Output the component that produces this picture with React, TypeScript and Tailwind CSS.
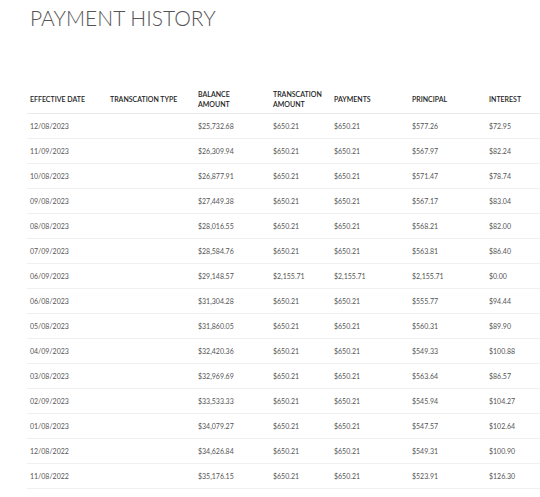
const rows = [
  ["12/08/2023","$25,732.68","$650.21","$650.21","$577.26","$72.95"],
  ["11/09/2023","$26,309.94","$650.21","$650.21","$567.97","$82.24"],
  ["10/08/2023","$26,877.91","$650.21","$650.21","$571.47","$78.74"],
  ["09/08/2023","$27,449.38","$650.21","$650.21","$567.17","$83.04"],
  ["08/08/2023","$28,016.55","$650.21","$650.21","$568.21","$82.00"],
  ["07/09/2023","$28,584.76","$650.21","$650.21","$563.81","$86.40"],
  ["06/09/2023","$29,148.57","$2,155.71","$2,155.71","$2,155.71","$0.00"],
  ["06/08/2023","$31,304.28","$650.21","$650.21","$555.77","$94.44"],
  ["05/08/2023","$31,860.05","$650.21","$650.21","$560.31","$89.90"],
  ["04/09/2023","$32,420.36","$650.21","$650.21","$549.33","$100.88"],
  ["03/08/2023","$32,969.69","$650.21","$650.21","$563.64","$86.57"],
  ["02/09/2023","$33,533.33","$650.21","$650.21","$545.94","$104.27"],
  ["01/08/2023","$34,079.27","$650.21","$650.21","$547.57","$102.64"],
  ["12/08/2022","$34,626.84","$650.21","$650.21","$549.31","$100.90"],
  ["11/08/2022","$35,176.15","$650.21","$650.21","$523.91","$126.30"],
];
const cols = "grid grid-cols-[80px_88px_75px_61px_78px_77px_1fr] items-center";
export default function App() {
  return (
    <div className="w-[540px] h-[497px] overflow-hidden bg-white pl-[30px] text-[#333]" style={{fontFamily: "Lato, 'Open Sans', sans-serif"}}>
      <h1 className="pt-[5px] text-[21px] font-light text-[#555] leading-[26px]">PAYMENT HISTORY</h1>
      <div className="mt-[53px]">
        <div className={cols + " h-[30px] text-[7px] font-semibold leading-[10px] text-[#222] border-b border-[#eaeaea] -ml-[3px] pl-[3px]"}>
          <div>EFFECTIVE DATE</div>
          <div>TRANSCATION TYPE</div>
          <div>BALANCE<br/>AMOUNT</div>
          <div>TRANSCATION<br/>AMOUNT</div>
          <div>PAYMENTS</div>
          <div>PRINCIPAL</div>
          <div>INTEREST</div>
        </div>
        {rows.map((r, i) => (
          <div key={i} className={cols + " h-[25px] text-[7px] text-[#555] border-b border-[#f0f0f0] -ml-[3px] pl-[3px]"}>
            <div>{r[0]}</div>
            <div></div>
            <div>{r[1]}</div>
            <div>{r[2]}</div>
            <div>{r[3]}</div>
            <div>{r[4]}</div>
            <div>{r[5]}</div>
          </div>
        ))}
      </div>
    </div>
  );
}
